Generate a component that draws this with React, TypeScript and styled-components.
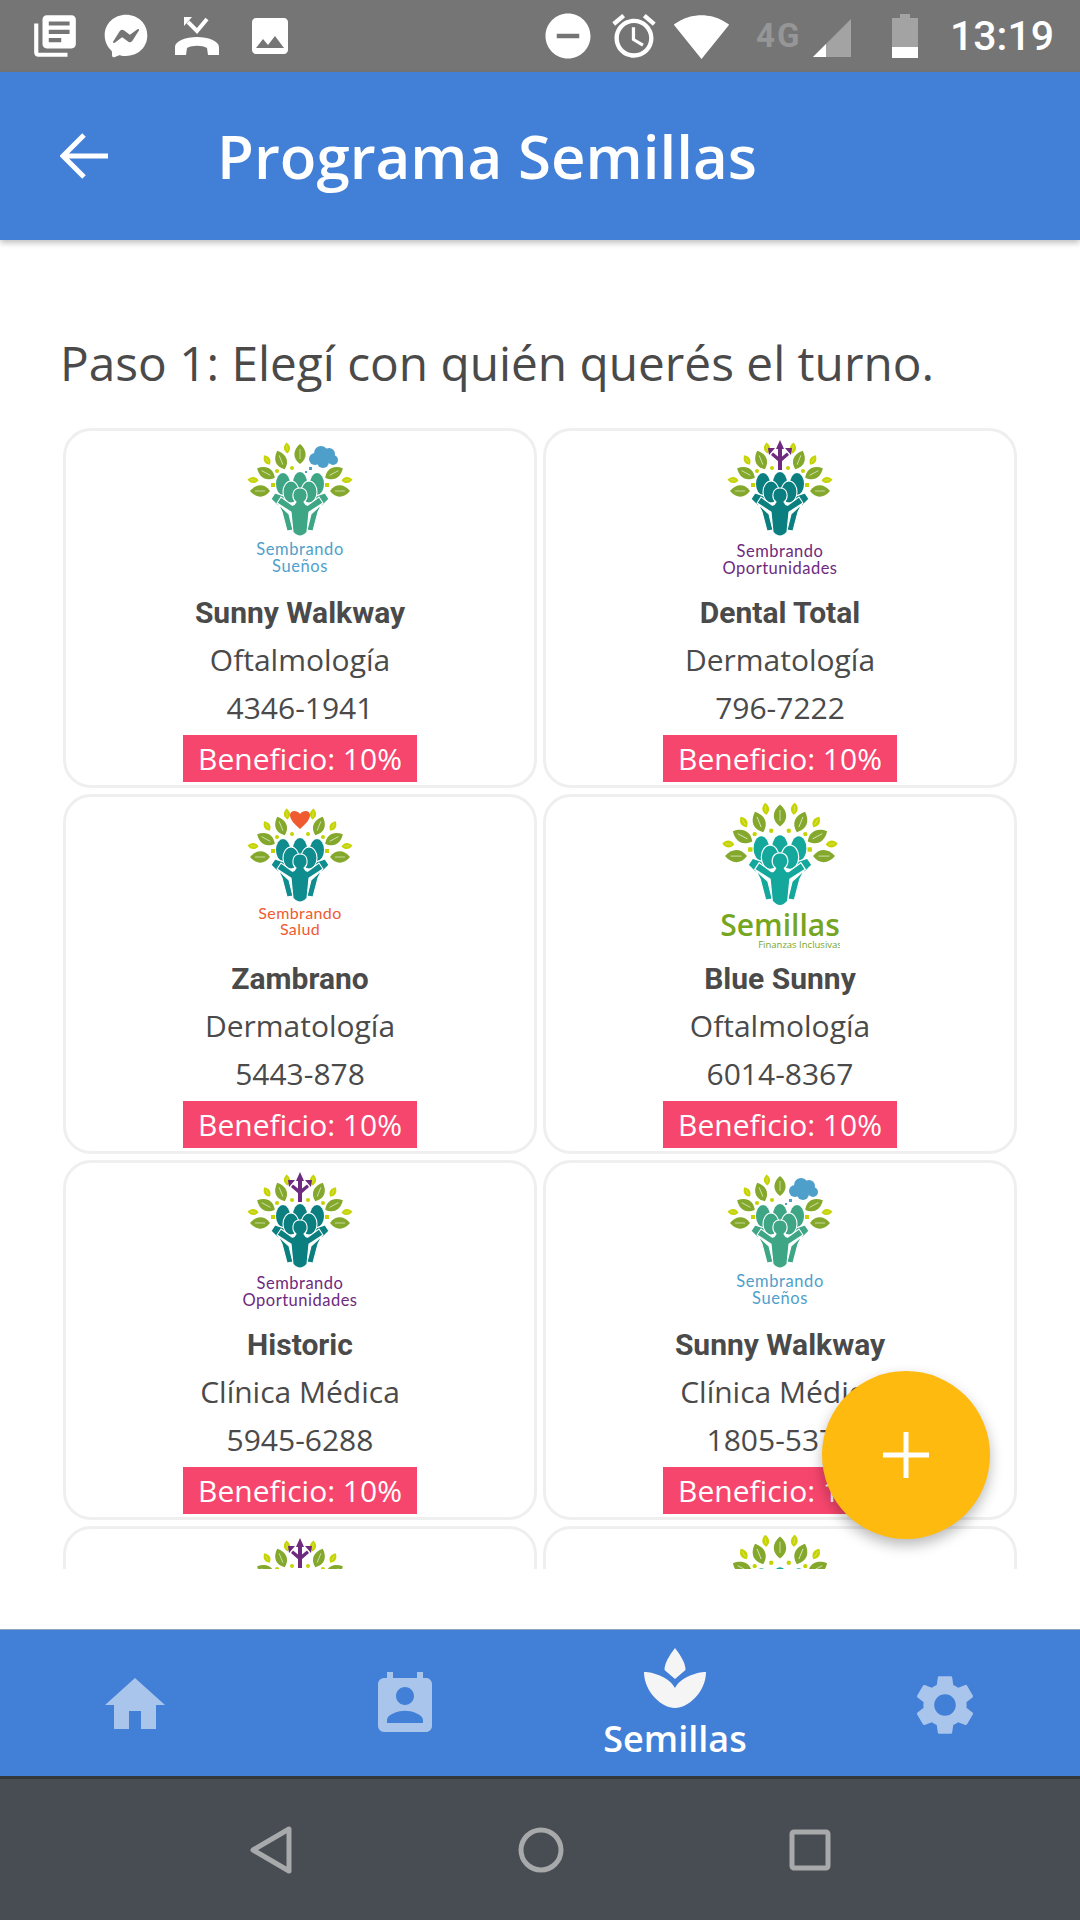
import styled, { createGlobalStyle } from "styled-components";
import { MdHome, MdPermContactCalendar, MdSettings, MdLibraryBooks, MdImage, MdDoNotDisturbOn, MdAccessAlarm, MdSignalWifi4Bar } from "react-icons/md";
import { FaFacebookMessenger } from "react-icons/fa";

const GlobalStyle = createGlobalStyle`
  html, body { margin: 0; padding: 0; background: #fff; }
  #root { width: 1080px; height: 1920px; }
  * { box-sizing: border-box; }
`;

const Screen = styled.div`
  width: 1080px;
  height: 1920px;
  display: flex;
  flex-direction: column;
  font-family: "Open Sans", sans-serif;
  color: #4a4a4a;
  background: #fff;
`;

const StatusBar = styled.div`
  height: 72px;
  flex: none;
  background: #757575;
  display: flex;
  align-items: center;
  justify-content: space-between;
  padding: 0 26px 0 30px;
  color: #fff;
`;

const StatusGroup = styled.div<{ $gap: number }>`
  display: flex;
  align-items: center;
  gap: ${(p) => p.$gap}px;
`;

const Clock = styled.span`
  font-family: Roboto, sans-serif;
  font-size: 41px;
  font-weight: 500;
  margin-left: 19px;
`;

const FourG = styled.span`
  font-family: Roboto, sans-serif;
  font-size: 33px;
  line-height: 33px;
  font-weight: 700;
  letter-spacing: 2px;
  color: #969696;
  align-self: flex-start;
  width: 44px;
  margin: 11px 0 0 13px;
`;

const SignalIcon = styled.svg`
  margin-top: 4px;
`;

const BatteryIcon = styled.svg`
  margin-left: 28px;
`;

const Header = styled.header`
  height: 168px;
  flex: none;
  background: #427fd7;
  display: flex;
  align-items: center;
  gap: 109px;
  padding-left: 60px;
  color: #fff;
  box-shadow: 0 3px 6px rgba(0, 0, 0, 0.25);
  position: relative;
  z-index: 1;
`;

const Title = styled.h1`
  margin: 0;
  font-size: 60px;
  font-weight: 600;
  line-height: 1;
`;

const Content = styled.main`
  flex: 1;
  position: relative;
  padding: 90px 0 0 60px;
  min-height: 0;
`;

const Step = styled.h2`
  margin: 0 0 32px;
  height: 66px;
  font-size: 47.75px;
  font-weight: 400;
  line-height: 66px;
  white-space: nowrap;
`;

const List = styled.div`
  margin-left: 3px;
  width: 954px;
  height: 1141px;
  overflow: hidden;
  display: grid;
  grid-template-columns: 474px 474px;
  grid-auto-rows: 360px;
  column-gap: 6px;
  row-gap: 6px;
`;

const Card = styled.article`
  border: 3px solid #efefef;
  border-radius: 28px;
  display: flex;
  flex-direction: column;
  align-items: center;
  background: #fff;
`;

const LogoSvg = styled.svg`
  display: block;
  width: 120px;
  height: 157px;
  flex: none;
`;

const Name = styled.div`
  font-family: Roboto, sans-serif;
  font-weight: 700;
  font-size: 30px;
  line-height: 46px;
  padding-top: 2px;
`;

const Line = styled.div`
  font-size: 30px;
  line-height: 48px;
`;

const Badge = styled.div`
  margin-top: 3px;
  width: 234px;
  height: 47px;
  background: #f7466d;
  color: #fff;
  font-size: 30px;
  line-height: 47px;
  text-align: center;
`;

const Fab = styled.button`
  position: absolute;
  left: 822px;
  top: 1131px;
  width: 168px;
  height: 168px;
  border: 0;
  border-radius: 50%;
  padding: 0;
  background: #ffba10;
  color: #fff;
  display: flex;
  align-items: center;
  justify-content: center;
  box-shadow: 0 6px 14px rgba(0, 0, 0, 0.28);
`;

const BottomNav = styled.nav`
  height: 150px;
  flex: none;
  background: #427fd7;
  border-top: 1px solid #8fa5c2;
  border-bottom: 3px solid #33383a;
  display: grid;
  grid-template-columns: repeat(4, 270px);
`;

const Tab = styled.div<{ $active?: boolean }>`
  display: flex;
  flex-direction: column;
  align-items: center;
  justify-content: center;
  padding-top: ${(p) => (p.$active ? 0 : 3)}px;
  color: ${(p) => (p.$active ? "#fff" : "#a9c5ec")};
`;

const TabLabel = styled.span`
  margin-top: 9px;
  font-size: 36px;
  font-weight: 600;
  line-height: 40px;
`;

const SystemBar = styled.div`
  height: 141px;
  flex: none;
  background: #474d53;
  display: flex;
  align-items: center;
  justify-content: center;
  gap: 225px;
  color: #a7a9aa;
`;

const BLUE = "#4f9fcb";
const PURPLE = "#6e2a7e";
const DARK_LEAF = "#83a82b";
const LIME = "#c5d300";

const Leaf = ({ x, y, r, s, c }: { x: number; y: number; r: number; s: number; c: string }) => (
  <g transform={`translate(${x} ${y}) rotate(${r}) scale(${s})`}>
    <path d="M0 -10C7 -4 8 4 0 10C-8 4 -7 -4 0 -10Z" fill={c} />
    <path d="M0 -5V5" stroke="#fff" strokeWidth="0.8" opacity="0.7" />
  </g>
);

type Kind = "suenos" | "oportunidades" | "salud" | "semillas";

const Tree = ({ kind, people }: { kind: Kind; people: string }) => {
  const cloud = kind === "suenos";
  return (
    <g>
      <Leaf x={-13} y={18} r={-5} s={0.55} c={LIME} />
      <Leaf x={-33} y={30} r={-30} s={0.55} c={LIME} />
      <Leaf x={-19} y={30} r={-22} s={1} c={DARK_LEAF} />
      <Leaf x={-34} y={43} r={-62} s={1} c={DARK_LEAF} />
      <Leaf x={-47} y={50} r={-85} s={0.55} c={LIME} />
      <Leaf x={-40} y={61} r={-90} s={1} c={DARK_LEAF} />
      <Leaf x={34} y={43} r={62} s={1} c={DARK_LEAF} />
      <Leaf x={47} y={50} r={85} s={0.55} c={LIME} />
      <Leaf x={40} y={61} r={90} s={1} c={DARK_LEAF} />
      {(kind === "suenos" || kind === "semillas") && <Leaf x={0} y={24} r={0} s={1} c={DARK_LEAF} />}
      {!cloud && (
        <>
          <Leaf x={13} y={18} r={5} s={0.55} c={LIME} />
          <Leaf x={33} y={30} r={30} s={0.55} c={LIME} />
          <Leaf x={19} y={30} r={22} s={1} c={DARK_LEAF} />
        </>
      )}
      <g fill={LIME}>
        <circle cx={-23} cy={41} r={2} />
        <circle cx={-8} cy={38} r={2} />
        <rect x={-29} y={53} width={4} height={4} />
        <rect x={25} y={53} width={4} height={4} />
        {!cloud && <circle cx={8} cy={38} r={2} />}
        {!cloud && <circle cx={23} cy={41} r={2} />}
      </g>
      {cloud && (
        <g fill={BLUE}>
          <circle cx={15} cy={29} r={6} />
          <circle cx={21} cy={23} r={7} />
          <circle cx={29} cy={24} r={6} />
          <circle cx={33} cy={30} r={5} />
          <circle cx={23} cy={32} r={6} />
          <rect x={9} y={37} width={3} height={3} />
          <rect x={5} y={41} width={2} height={2} />
        </g>
      )}
      {kind === "oportunidades" && (
        <g fill={PURPLE}>
          <path d="M-2 40V18H2V40Z" />
          <path d="M0 10L4 19H-4Z" />
          <path d="M-1 32L-9 25L-7 22.5L1 29Z" />
          <path d="M1 32L9 25L7 22.5L-1 29Z" />
          <path d="M-12 18H-5L-11 25Z" />
          <path d="M12 18H5L11 25Z" />
        </g>
      )}
      {kind === "salud" && (
        <path d="M0 33C-7 27 -10 23 -10 19C-10 15 -4 13 0 18C4 13 10 15 10 19C10 23 7 27 0 33Z" fill="#f05a30" />
      )}
      <g fill={people}>
        <ellipse cx={-17} cy={54} rx={7} ry={11} />
        <ellipse cx={0} cy={53} rx={7} ry={11} />
        <ellipse cx={17} cy={54} rx={7} ry={11} />
      </g>
      <g fill={people} stroke="#fff" strokeWidth="1.1">
        <path d="M-29 69L-25 63L-10 68L-12 77L-20 78Z" />
        <path d="M29 69L25 63L10 68L12 77L20 78Z" />
        <ellipse cx={-9} cy={62} rx={8} ry={11} />
        <ellipse cx={9} cy={62} rx={8} ry={11} />
        <path d="M-22 74L-11 84L-7 100L-13 101L-18 82Z" />
        <path d="M22 74L11 84L7 100L13 101L18 82Z" />
        <path d="M-4 72C-9 68 -8 58 0 58C8 58 9 68 4 72Q6 76 8 75L19 67L23 73L9 82L7 102Q0 110 -7 102L-9 82L-23 73L-19 67L-8 75Q-6 76 -4 72Z" />
      </g>
    </g>
  );
};

const LOGO_COLORS: Record<Kind, string> = {
  suenos: "#3ea585",
  oportunidades: "#0b7f80",
  salud: "#0e8c8e",
  semillas: "#14a89d",
};

const Logo = ({ kind }: { kind: Kind }) => (
  <LogoSvg viewBox="-60 1 120 157">
    {kind === "semillas" ? (
      <>
        <g transform="translate(0 -7) scale(1.1)">
          <Tree kind={kind} people={LOGO_COLORS[kind]} />
        </g>
        <text x="0" y="140" textAnchor="middle" fontFamily="Open Sans" fontWeight="600" fontSize="30" fill="#76a51f">Semillas</text>
        <text x="20" y="152" textAnchor="middle" fontFamily="Open Sans" fontSize="9.5" fill="#76a51f">Finanzas Inclusivas</text>
      </>
    ) : (
      <>
        <Tree kind={kind} people={LOGO_COLORS[kind]} />
        {kind === "suenos" && (
          <g textAnchor="middle" fontFamily="Lato" fontSize="16.5" fill={BLUE} letterSpacing="0.6">
            <text x="0" y="125">Sembrando</text>
            <text x="0" y="142">Sueños</text>
          </g>
        )}
        {kind === "oportunidades" && (
          <g textAnchor="middle" fontFamily="Lato" fontSize="16.5" fill={PURPLE} letterSpacing="0.5">
            <text x="0" y="127">Sembrando</text>
            <text x="0" y="144">Oportunidades</text>
          </g>
        )}
        {kind === "salud" && (
          <g textAnchor="middle" fontFamily="Lato" fontSize="16" fill="#f05a30" letterSpacing="0.4">
            <text x="0" y="123">Sembrando</text>
            <text x="0" y="139">Salud</text>
          </g>
        )}
      </>
    )}
  </LogoSvg>
);

const providers: { kind: Kind; name: string; spec: string; phone: string }[] = [
  { kind: "suenos", name: "Sunny Walkway", spec: "Oftalmología", phone: "4346-1941" },
  { kind: "oportunidades", name: "Dental Total", spec: "Dermatología", phone: "796-7222" },
  { kind: "salud", name: "Zambrano", spec: "Dermatología", phone: "5443-878" },
  { kind: "semillas", name: "Blue Sunny", spec: "Oftalmología", phone: "6014-8367" },
  { kind: "oportunidades", name: "Historic", spec: "Clínica Médica", phone: "5945-6288" },
  { kind: "suenos", name: "Sunny Walkway", spec: "Clínica Médica", phone: "1805-5375" },
  { kind: "oportunidades", name: "Historic", spec: "Clínica Médica", phone: "5945-6288" },
  { kind: "semillas", name: "Blue Sunny", spec: "Oftalmología", phone: "6014-8367" },
];

const SeedIcon = () => (
  <svg width="62" height="62" viewBox="0 0 62 62" fill="#f5f5f5">
    <path d="M31 0C25 8 20.5 15 20.5 22L31 31L41.5 22C41.5 15 37 8 31 0Z" />
    <path d="M0 24C10 24 26 30 31 40C36 30 52 24 62 24C62 44 44 60 31 60C18 60 0 44 0 24Z" />
  </svg>
);

const MissedCall = () => (
  <svg width="50" height="50" viewBox="0 0 50 50" fill="#fff">
    <path d="M3 44V36C3 30 14 26 25 26C36 26 47 30 47 36V44H36L35 37C30 34 20 34 15 37L14 44Z" />
    <path d="M16 11L25 20L35 8" fill="none" stroke="#fff" strokeWidth="4" />
    <path d="M12 6H20L12 15Z" />
  </svg>
);

export default function App() {
  return (
    <Screen>
      <GlobalStyle />
      <StatusBar>
        <StatusGroup $gap={24}>
          <MdLibraryBooks size={50} />
          <FaFacebookMessenger size={44} />
          <MissedCall />
          <MdImage size={48} />
        </StatusGroup>
        <StatusGroup $gap={13}>
          <MdDoNotDisturbOn size={54} />
          <MdAccessAlarm size={52} />
          <MdSignalWifi4Bar size={57} />
          <FourG>4G</FourG>
          <SignalIcon width="38" height="38" viewBox="0 0 38 38">
            <path d="M38 0V38H0Z" fill="#a3a3a3" />
            <path d="M13 25V38H0Z" fill="#fff" />
          </SignalIcon>
          <BatteryIcon width="26" height="44" viewBox="0 0 26 44">
            <path d="M8 0H18V4H26V44H0V4H8Z" fill="#a3a3a3" />
            <rect y="33" width="26" height="11" fill="#fff" />
          </BatteryIcon>
          <Clock>13:19</Clock>
        </StatusGroup>
      </StatusBar>

      <Header>
        <svg width="48" height="46" viewBox="0 0 48 46" fill="none" stroke="#fff" strokeWidth="5">
          <path d="M48 23H4M24 2L3 23L24 44" />
        </svg>
        <Title>Programa Semillas</Title>
      </Header>

      <Content>
        <Step>Paso 1: Elegí con quién querés el turno.</Step>
        <List>
          {providers.map((p, i) => (
            <Card key={i}>
              <Logo kind={p.kind} />
              <Name>{p.name}</Name>
              <Line>{p.spec}</Line>
              <Line>{p.phone}</Line>
              <Badge>Beneficio: 10%</Badge>
            </Card>
          ))}
        </List>
        <Fab aria-label="Agregar">
          <svg width="46" height="46" viewBox="0 0 46 46" fill="none" stroke="#fff" strokeWidth="5">
            <path d="M23 0V46M0 23H46" />
          </svg>
        </Fab>
      </Content>

      <BottomNav>
        <Tab><MdHome size={72} /></Tab>
        <Tab><MdPermContactCalendar size={72} /></Tab>
        <Tab $active>
          <SeedIcon />
          <TabLabel>Semillas</TabLabel>
        </Tab>
        <Tab><MdSettings size={72} /></Tab>
      </BottomNav>

      <SystemBar>
        <svg width="44" height="48" viewBox="0 0 44 48" fill="none" stroke="currentColor" strokeWidth="5" strokeLinejoin="round">
          <path d="M40 3V45L4 24Z" />
        </svg>
        <svg width="46" height="46" viewBox="0 0 46 46" fill="none" stroke="currentColor" strokeWidth="5">
          <circle cx="23" cy="23" r="20" />
        </svg>
        <svg width="42" height="42" viewBox="0 0 42 42" fill="none" stroke="currentColor" strokeWidth="5">
          <rect x="3" y="3" width="36" height="36" rx="2" />
        </svg>
      </SystemBar>
    </Screen>
  );
}
